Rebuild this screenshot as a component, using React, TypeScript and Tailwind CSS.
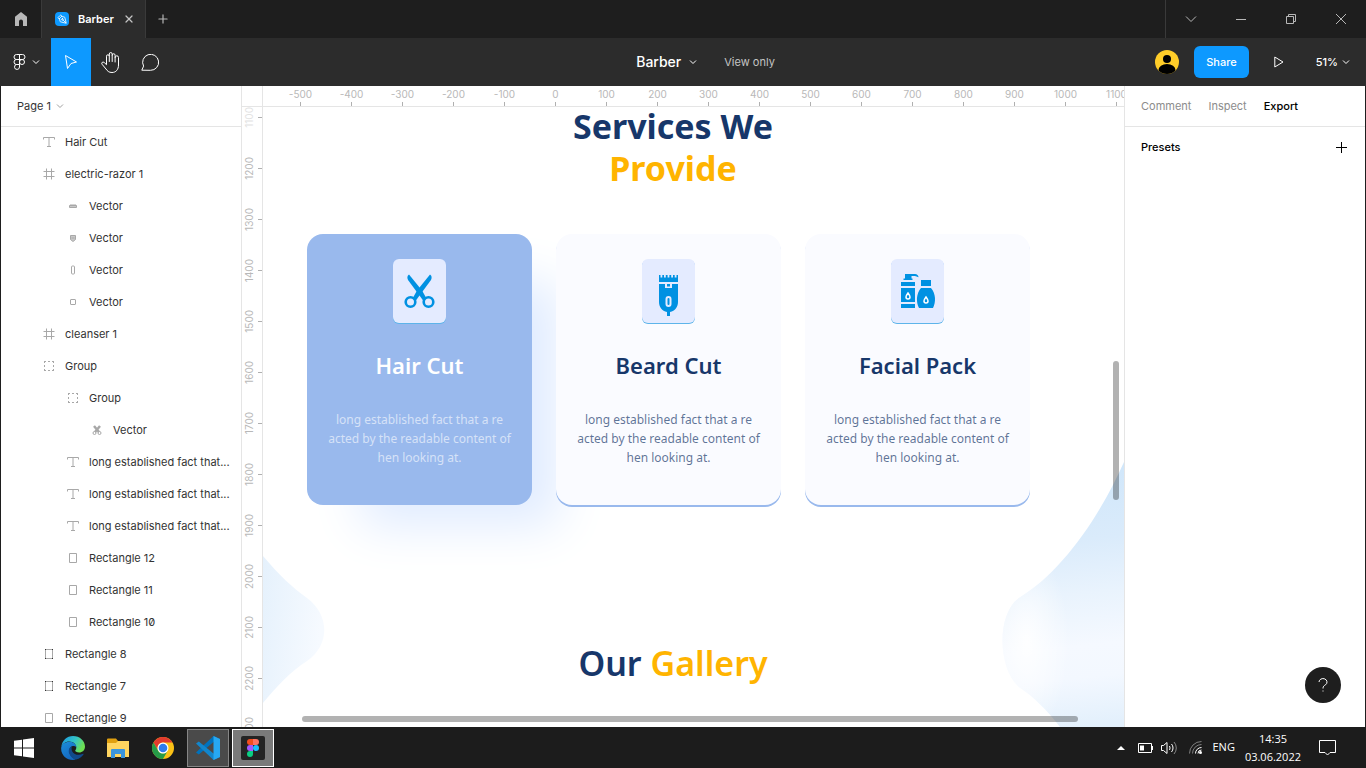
import React from "react";
import { PenTool, Plus, X } from "lucide-react";

function Chevron({ className = "" }: { className?: string }) {
  return (
    <svg width="8" height="8" viewBox="0 0 8 8" fill="none" stroke="currentColor" className={className} aria-hidden="true">
      <path d="M1 2.5l3 3 3-3" />
    </svg>
  );
}

/* ---------- Title bar and toolbar ---------- */

function TitleBar() {
  return (
    <header className="flex h-[38px] shrink-0 items-stretch bg-[#1e1e1e] text-[#b8b8b8]">
      <button aria-label="Home" className="flex w-[42px] items-center justify-center border-r border-[#3a3a3a]">
        <svg width="12" height="14" viewBox="0 0 12 14" fill="#b8b8b8">
          <path d="M6 0l6 4.8V14H8V9.5a2 2 0 0 0-4 0V14H0V4.800z" />
        </svg>
      </button>
      <div className="flex w-[104px] items-center border-r border-[#3a3a3a] bg-[#2c2c2c] pl-[13px]">
        <span className="flex size-[14px] items-center justify-center rounded-sm bg-[#0d99ff] text-white">
          <PenTool size={10} strokeWidth={2} className="-scale-x-100 rotate-90" />
        </span>
        <span className="ml-[9px] text-[11px] font-semibold text-white">Barber</span>
        <button aria-label="Close tab" className="ml-[9px] text-[#c4c4c4]">
          <X size={12} strokeWidth={2.5} />
        </button>
      </div>
      <button aria-label="New tab" className="flex w-[34px] items-center justify-center">
        <Plus size={14} strokeWidth={2} />
      </button>
      <div className="ml-auto flex border-l border-[#3a3a3a]">
        <button aria-label="Show tabs" className="flex w-[50px] items-center justify-center">
          <svg width="12" height="8" viewBox="0 0 12 8" fill="none" stroke="currentColor"><path d="M1 1.500l5 5 5-5" /></svg>
        </button>
        <button aria-label="Minimize" className="flex w-[50px] items-center justify-center">
          <svg width="10" height="10" viewBox="0 0 10 10" stroke="currentColor"><path d="M0 5.500h10" /></svg>
        </button>
        <button aria-label="Restore" className="flex w-[50px] items-center justify-center">
          <svg width="10" height="10" viewBox="0 0 10 10" fill="none" stroke="currentColor"><path d="M.5 2.500h7v7h-7zM2.500 2.500v-2h7v7h-2" /></svg>
        </button>
        <button aria-label="Close window" className="flex w-[50px] items-center justify-center">
          <svg width="10" height="10" viewBox="0 0 10 10" stroke="currentColor"><path d="M0 0l10 10M10 0L0 10" /></svg>
        </button>
      </div>
    </header>
  );
}

function Toolbar() {
  return (
    <nav className="flex h-12 shrink-0 items-stretch bg-[#2c2c2c] text-white">
      <div className="flex flex-1 items-stretch pl-px">
        <button aria-label="Main menu" className="flex w-[50px] items-center gap-1.5 pl-3">
          <svg width="13" height="16" viewBox="0 0 13 16" fill="none" stroke="white">
            <path d="M6.500.5h-3a2.500 2.500 0 0 0 0 5h3zM6.500.5h3a2.500 2.500 0 0 1 0 5h-3zM6.500 5.500h-3a2.500 2.500 0 0 0 0 5h3zM3.500 10.500a2.500 2.500 0 1 0 3 2.500v-2.500z" />
            <circle cx="9" cy="8" r="2.500" />
          </svg>
          <Chevron />
        </button>
        <button aria-label="Move" className="flex w-10 items-center justify-center bg-[#0d99ff]">
          <svg width="14" height="16" viewBox="0 0 14 16" fill="none" stroke="white" strokeLinejoin="round">
            <path d="M1.500 1.500l11 6.500-5.500 1.500L3.500 14.500z" />
          </svg>
        </button>
        <button aria-label="Hand tool" className="flex w-[39px] items-center justify-center">
          <svg width="19" height="21" viewBox="0 0 19 21" fill="none" stroke="white" strokeLinecap="round" strokeLinejoin="round">
            <path d="M5.500 11V4.200a1.400 1.400 0 0 1 2.800 0V9.500M8.300 4V2a1.400 1.400 0 0 1 2.900 0v7.500M11.200 3.200a1.400 1.400 0 0 1 2.900 0V10M14.100 5.500a1.600 1.600 0 0 1 3.400 0V13c0 4.500-2.500 7.500-6.500 7.500-3.200 0-4.600-1.500-6-3.500L1 12.200c-1-1.400.8-2.900 2.200-1.700l2.300 2.200V11" />
          </svg>
        </button>
        <button aria-label="Add comment" className="flex w-10 items-center justify-center">
          <svg width="18" height="17" viewBox="0 0 18 17" fill="none" stroke="white" strokeLinejoin="round">
            <path d="M.8 16.200l1.800-4.100A8 8 0 1 1 9.500 16.300z" />
          </svg>
        </button>
      </div>
      <div className="flex items-center pl-11">
        <button className="flex items-center gap-2 text-sm font-medium">
          Barber
          <Chevron />
        </button>
        <span className="ml-[27px] text-[11px] text-[#c4c4c4]">View only</span>
      </div>
      <div className="flex flex-1 items-center justify-end">
        <svg width="24" height="24" viewBox="0 0 24 24" role="img" aria-label="Account">
          <defs><clipPath id="avatar"><circle cx="12" cy="12" r="12" /></clipPath></defs>
          <g clipPath="url(#avatar)">
            <rect width="24" height="24" fill="#ffcd29" />
            <circle cx="12" cy="9" r="4" />
            <ellipse cx="12" cy="20" rx="8.500" ry="6" />
          </g>
        </svg>
        <button className="ml-[15px] h-8 rounded-md bg-[#0d99ff] px-3 text-[11px] font-medium">Share</button>
        <button aria-label="Present" className="ml-[25px]">
          <svg width="10" height="12" viewBox="0 0 10 12" fill="none" stroke="white"><path d="M.8 1v10L9 6z" /></svg>
        </button>
        <button className="ml-8 mr-4 flex items-center gap-1 text-[11px] font-medium">
          51%
          <Chevron />
        </button>
      </div>
    </nav>
  );
}

/* ---------- Layers panel ---------- */

type LayerKind = "text" | "frame" | "group" | "rect" | "image" | "blade" | "body" | "pill" | "square" | "scissors";

const layers: { name: string; kind: LayerKind; level: 0 | 1 | 2 }[] = [
  { name: "Hair Cut", kind: "text", level: 0 },
  { name: "electric-razor 1", kind: "frame", level: 0 },
  { name: "Vector", kind: "blade", level: 1 },
  { name: "Vector", kind: "body", level: 1 },
  { name: "Vector", kind: "pill", level: 1 },
  { name: "Vector", kind: "square", level: 1 },
  { name: "cleanser 1", kind: "frame", level: 0 },
  { name: "Group", kind: "group", level: 0 },
  { name: "Group", kind: "group", level: 1 },
  { name: "Vector", kind: "scissors", level: 2 },
  { name: "long established fact that...", kind: "text", level: 1 },
  { name: "long established fact that...", kind: "text", level: 1 },
  { name: "long established fact that...", kind: "text", level: 1 },
  { name: "Rectangle 12", kind: "rect", level: 1 },
  { name: "Rectangle 11", kind: "rect", level: 1 },
  { name: "Rectangle 10", kind: "rect", level: 1 },
  { name: "Rectangle 8", kind: "image", level: 0 },
  { name: "Rectangle 7", kind: "image", level: 0 },
  { name: "Rectangle 9", kind: "rect", level: 0 },
];

const indents = { 0: "pl-[42px]", 1: "pl-[66px]", 2: "pl-[90px]" };

function LayerIcon({ kind }: { kind: LayerKind }) {
  return (
    <svg width="12" height="12" viewBox="0 0 12 12" fill="none" stroke="#a8a8a8" className="shrink-0" aria-hidden="true">
      {kind === "text" && <path d="M.5 3.500v-2h11v2M6 1.500v9.500M4 10.500h4" />}
      {kind === "frame" && <path d="M3.500.5v11M8.500.5v11M.5 3.500h11M.5 8.500h11" />}
      {kind === "group" && <path d="M1 1.500h2M5 1.500h2M9 1.500h2M1 10.500h2M5 10.500h2M9 10.500h2M1.500 1v2M1.500 5v2M1.500 9v2M10.500 1v2M10.500 5v2M10.500 9v2" />}
      {kind === "rect" && <path d="M2.500 1.500h7v9h-7z" />}
      {kind === "image" && (
        <>
          <path d="M2.500 1.500h7v9h-7z" />
          <path d="M2 1.500h1M9 1.500h1M2 10.500h1M9 10.500h1" stroke="#333333" />
        </>
      )}
      {kind === "blade" && <path d="M2.500 7.500v-2h7v2zM3 5h6" fill="#c8c8c8" />}
      {kind === "body" && <path d="M3.500 3.500h5v4L6 9.500 3.500 7.500zM4.500 6h3" fill="#c8c8c8" />}
      {kind === "pill" && <rect x="4.500" y="2" width="3" height="8" rx="1" />}
      {kind === "square" && <rect x="3.500" y="3.500" width="5" height="5" rx="0.500" />}
      {kind === "scissors" && (
        <>
          <path d="M3 2l5 6M9 2L4 8" strokeWidth="2.500" />
          <circle cx="3.500" cy="9" r="1.500" />
          <circle cx="8.500" cy="9" r="1.500" />
        </>
      )}
    </svg>
  );
}

function LayersPanel() {
  return (
    <aside className="flex w-60 shrink-0 flex-col overflow-hidden bg-white text-[11px] text-[#333333]">
      <button className="flex h-10 shrink-0 items-center gap-[5px] pl-4 shadow-[0_1px_0_#e5e5e5]">
        Page 1
        <Chevron className="text-[#a0a0a0]" />
      </button>
      <ul className="slashed-zero">
        {layers.map((layer, i) => (
          <li key={i} className={`flex h-8 items-center gap-[10px] ${indents[layer.level]}`}>
            <LayerIcon kind={layer.kind} />
            <span className="whitespace-nowrap">{layer.name}</span>
          </li>
        ))}
      </ul>
    </aside>
  );
}

/* ---------- Canvas ---------- */

const xMarks = Array.from({ length: 17 }, (_, i) => -500 + i * 100);
const yMarks = Array.from({ length: 13 }, (_, i) => 1100 + i * 100);

function ScissorsIcon() {
  return (
    <svg width="53" height="64" viewBox="0 0 53 64" fill="#0091e2" aria-hidden="true">
      <path d="M16 15.500c-1.700 1.300-2.200 3.200-1 5.500L30.500 42l3-2.600-4.500-8z" />
      <path d="M37 15.500c1.700 1.300 2.200 3.200 1 5.500L22.500 42l-3-2.600 4.500-8z" />
      <g fill="none" stroke="#0091e2" strokeWidth="2.600">
        <circle cx="17.500" cy="43" r="4.800" />
        <circle cx="35.500" cy="43" r="4.800" />
      </g>
    </svg>
  );
}

function RazorIcon() {
  return (
    <svg width="53" height="64" viewBox="0 0 53 64" fill="#0091e2" aria-hidden="true">
      <path d="M17 16h1.500v2.500h1.800V16H22v2.500h1.800V16h1.800v2.500h1.800V16h1.800v2.500H31V16h1.700v2.500h1.800V16H36v7H17z" />
      <path d="M17 25h6v4h7v-4h6v18c0 5-3 9-8 10v4h-3v-4c-5-1-8-5-8-10z" />
      <path d="M25 25h3v2.500h-3z" />
      <rect x="24.500" y="38" width="4" height="9" rx="2" fill="none" stroke="#e4ebff" strokeWidth="2" />
    </svg>
  );
}

function CleanserIcon() {
  return (
    <svg width="53" height="64" viewBox="0 0 53 64" fill="#0091e2" aria-hidden="true">
      <path d="M14 15h10c2 0 3.500 1.300 3.500 3.200l-2-.7c-.6-.3-1-.5-2-.5h-3v2.500h1V21h-9v-1.500h1.500zM10 23h14v4H10zM10 29h14v14H10zM10 45h14v4H10zM30 21h10v6H30zM30 29h10c5 6 5 14 2 20H28c-3-6-3-14 2-20z" />
      <path d="M17 34c1.500 2 2 3 2 4a2 2 0 0 1-4 0c0-1 .5-2 2-4zM35 38c1.500 2 2 3 2 4a2 2 0 0 1-4 0c0-1 .5-2 2-4z" stroke="white" strokeWidth="1.500" />
    </svg>
  );
}

const services = [
  { title: "Hair Cut", icon: <ScissorsIcon />, active: true },
  { title: "Beard Cut", icon: <RazorIcon />, active: false },
  { title: "Facial Pack", icon: <CleanserIcon />, active: false },
];

function ServiceCard({ title, icon, active }: (typeof services)[number]) {
  return (
    <article
      className={`flex w-[225px] shrink-0 flex-col items-center rounded-2xl pt-[25px] pb-[38px] ${
        active
          ? "bg-[#99b9ed] text-white shadow-[40px_34px_50px_-14px_#dfebff]"
          : "relative bg-[#fafbff] text-[#17376a] shadow-[0_2px_0_#99b9ed]"
      }`}
    >
      <div className="rounded-md bg-[#e4ebff] shadow-[0_1px_0_#5db4ea]">{icon}</div>
      <h2 className="mt-[26px] text-[22px] leading-8 font-semibold">{title}</h2>
      <p className={`mt-[29px] text-center text-xs leading-[19px] ${active ? "text-white/60" : "text-[#17376a]/70"}`}>
        long established fact that a re
        <br />
        acted by the readable content of
        <br />
        hen looking at.
      </p>
    </article>
  );
}

function Canvas() {
  return (
    <main className="flex min-w-0 flex-1 flex-col border-l border-[#e5e5e5] bg-white">
      <div className="flex h-[21px] shrink-0 text-[10px] leading-4 text-[#b8b8b8]">
        <div className="w-[21px] shrink-0 border-r border-b border-[#e5e5e5]" />
        <div className="flex min-w-0 flex-1 overflow-hidden border-b border-[#e5e5e5] pl-3">
          {xMarks.map((mark) => (
            <div key={mark} className="flex w-[51px] shrink-0 flex-col items-center">
              {mark}
              <span className="h-1 w-px bg-[#b0b0b0]" />
            </div>
          ))}
        </div>
      </div>
      <div className="flex min-h-0 flex-1">
        <div className="w-[21px] shrink-0 overflow-hidden border-r border-[#e5e5e5] text-[10px] leading-[14px] text-[#b8b8b8]">
          <div className="-mt-[15px] flex flex-col">
            {yMarks.map((mark) => (
              <div key={mark} className="flex h-[51px] shrink-0 items-center justify-between">
                <span className={`w-3.5 rotate-180 text-center [writing-mode:vertical-rl] ${mark === 1100 ? "opacity-40" : ""}`}>{mark}</span>
                <span className="h-px w-1 bg-[#b0b0b0]" />
              </div>
            ))}
          </div>
        </div>
        <div className="relative min-w-0 flex-1 overflow-hidden">
          <svg width="62" height="150" viewBox="0 0 62 150" className="absolute top-[449px] left-0" aria-hidden="true">
            <defs>
              <linearGradient id="waveLeft" x1="0" y1="0" x2="1" y2="0.300">
                <stop offset="0" stopColor="#e5f1fc" />
                <stop offset="1" stopColor="#f6faff" />
              </linearGradient>
            </defs>
            <path d="M0 0C16 19 30 32 44 42C67 59 67 89 44 105C28 115 14 130 0 147z" fill="url(#waveLeft)" />
          </svg>
          <svg width="122" height="265" viewBox="0 0 122 265" className="absolute right-0 bottom-0" aria-hidden="true">
            <defs>
              <linearGradient id="waveRight" x1="0.500" y1="0" x2="0.550" y2="1">
                <stop offset="0" stopColor="#cfe6fa" />
                <stop offset="0.300" stopColor="#daebfb" />
                <stop offset="0.500" stopColor="#e9f3fd" />
                <stop offset="0.700" stopColor="#f5f9ff" />
                <stop offset="0.820" stopColor="#f3f8ff" />
                <stop offset="1" stopColor="#e3f0fc" />
              </linearGradient>
              <radialGradient id="waveGlow" cx="0.200" cy="0.680" r="0.350">
                <stop offset="0" stopColor="white" stopOpacity="0.900" />
                <stop offset="1" stopColor="white" stopOpacity="0" />
              </radialGradient>
            </defs>
            <path d="M122 0C98 54 60 110 17 136C-5 151-5 205 17 225C32 235 45 248 58 265H122z" fill="url(#waveRight)" />
            <path d="M122 0C98 54 60 110 17 136C-5 151-5 205 17 225C32 235 45 248 58 265H122z" fill="url(#waveGlow)" />
          </svg>

          <div className="-mt-0.5 ml-11 w-[732px] font-['Noto_Sans',sans-serif]">
            <h1 className="text-center text-[34px] leading-[42px] font-bold text-[#17376a]">
              Services We
              <br />
              <span className="text-[#ffb400]">Provide</span>
            </h1>
            <div className="mt-[45px] flex gap-6">
              {services.map((service) => (
                <ServiceCard key={service.title} {...service} />
              ))}
            </div>
            <h1 className="mt-[137px] text-center text-[34px] leading-[42px] font-semibold text-[#17376a]">
              Our <span className="text-[#ffb400]">Gallery</span>
            </h1>
          </div>

          <div className="absolute right-[5px] top-[254px] h-[139px] w-1.5 rounded-full bg-black/30" />
          <div className="absolute right-[46px] bottom-[5px] left-[39px] h-1.5 rounded-full bg-black/30" />
        </div>
      </div>
    </main>
  );
}

/* ---------- Export panel ---------- */

function ExportPanel() {
  return (
    <aside className="relative w-[241px] shrink-0 border-l border-[#e5e5e5] bg-white text-[11px] text-black">
      <div className="flex h-[41px] items-center gap-[17px] border-b border-[#e5e5e5] pl-4">
        <button className="text-[#8c8c8c]">Comment</button>
        <button className="text-[#8c8c8c]">Inspect</button>
        <button className="font-medium">Export</button>
      </div>
      <div className="flex h-10 items-center justify-between pr-[18px] pl-4">
        <h3 className="font-medium">Presets</h3>
        <button aria-label="Add preset">
          <svg width="11" height="11" viewBox="0 0 11 11" stroke="black"><path d="M5.500 0v11M0 5.500h11" /></svg>
        </button>
      </div>
      <button aria-label="Help" className="absolute right-6 bottom-6 flex size-9 items-center justify-center rounded-full bg-[#1e1e1e]">
        <svg width="10" height="14" viewBox="0 0 10 14" fill="none" stroke="white">
          <path d="M1 4a4 3.500 0 1 1 6.500 2.800C6 7.800 5 8.300 5 10.500M5 12.500v1" />
        </svg>
      </button>
    </aside>
  );
}

/* ---------- Taskbar ---------- */

function Taskbar() {
  return (
    <footer className="flex h-[41px] shrink-0 items-stretch bg-[#1c1c1c] font-['Open_Sans',sans-serif] text-[11px] text-white">
      <button aria-label="Start" className="flex w-12 items-center justify-center">
        <svg width="20" height="20" viewBox="0 0 20 20" fill="white"><path d="M0 2.800l8-1.100v7.800H0zM9 1.500L20 0v9.500H9zM0 10.500h8v7.800l-8-1.100zM9 10.500h11V20L9 18.500z" /></svg>
      </button>
      <button aria-label="Edge" className="ml-0.5 flex w-[45px] items-center justify-center">
        <svg width="24" height="24" viewBox="0 0 24 24">
          <defs>
            <linearGradient id="edgeTop" x1="0" y1="0" x2="1" y2="0.400">
              <stop offset="0.100" stopColor="#1c9de0" />
              <stop offset="0.600" stopColor="#35c5c5" />
              <stop offset="1" stopColor="#6ddf52" />
            </linearGradient>
            <linearGradient id="edgeSide" x1="0" y1="0" x2="0.500" y2="1">
              <stop offset="0" stopColor="#1b8edb" />
              <stop offset="1" stopColor="#1568bf" />
            </linearGradient>
          </defs>
          <path d="M.3 11C1 4.500 5.800 0 12 0c6.800 0 12 5 12 10.500 0 3.700-2.600 6-5.800 6-2.600 0-4-1-4-1.900 0-.6 1.100-1.200 1.100-3.200 0-3-3-5.900-7-5.900-4 0-7 2.500-8 5.500z" fill="url(#edgeTop)" />
          <path d="M.2 11.500C1 8 4.500 5.800 8.500 5.800c4 0 6.800 2.600 6.800 5.300-1-.9-2.200-1.300-3.500-1C9 10.500 7.500 14 8.800 17.500c1 2.700 3.300 5 6 6.100C7.500 25.500-.6 20 .2 11.500z" fill="url(#edgeSide)" />
          <path d="M11 10.300c-3 1.200-4 4.500-2.600 7.700 1.200 3 4 5.300 6.800 5.500 3.300-.8 5.800-2.800 7.400-5.200.3-.5-.1-.8-.5-.6-4.500 2.300-9 .8-10.700-2-1-1.700-1.100-3.600-.4-5.400z" fill="#114a8b" />
        </svg>
      </button>
      <button aria-label="File Explorer" className="flex w-[45px] items-center justify-center">
        <svg width="22" height="20" viewBox="0 0 22 20">
          <path d="M0 1.500A1 1 0 0 1 1 .500h8l2 2.500v3H0z" fill="#e0a010" />
          <path d="M0 5h9l2-2h11v16H0z" fill="#ffd560" />
          <path d="M4 20v-8a1 1 0 0 1 1-1h12a1 1 0 0 1 1 1v8h-4v-4H8v4z" fill="#3a94dc" />
        </svg>
      </button>
      <button aria-label="Chrome" className="flex w-[45px] items-center justify-center">
        <svg width="22" height="22" viewBox="0 0 22 22">
          <circle cx="11" cy="11" r="11" fill="#fbc116" />
          <path d="M1.500 5.500A11 11 0 0 1 20.500 5.500H11a5.500 5.500 0 0 0-4.760 8.250z" fill="#e33b2e" />
          <path d="M1.470 5.500A11 11 0 0 0 11 22l4.760-8.250a5.500 5.500 0 0 1-9.520 0z" fill="#269b48" />
          <circle cx="11" cy="11" r="5.500" fill="white" />
          <circle cx="11" cy="11" r="4.300" fill="#2f7ced" />
        </svg>
      </button>
      <div className="flex w-[45px] items-center justify-center">
        <button aria-label="Visual Studio Code" className="flex h-[38px] w-[42px] items-center justify-center border border-[#868686] bg-[#4a4a4a]">
          <svg width="24" height="24" viewBox="0 0 24 24">
            <path d="M17.500 0L24 3v4l-6.500-1L2.800 18.500 0 16.500z" fill="#0072bd" />
            <path d="M0 7.500L2.800 5.500l14.700 12L24 17v4l-6.500 3z" fill="#1286cc" />
            <path d="M17.500 0L24 3v18l-6.500 3z" fill="#27a8f2" />
          </svg>
        </button>
      </div>
      <div className="flex w-[45px] items-center justify-center">
        <button aria-label="Figma" className="flex h-[38px] w-[42px] items-center justify-center border border-white bg-[#7a7a7a]">
          <svg width="24" height="24" viewBox="0 0 24 24">
            <rect width="24" height="24" rx="2" fill="#242424" />
            <path d="M12 3H9a3 3 0 0 0 0 6h3z" fill="#f24e1e" />
            <path d="M12 3h3a3 3 0 0 1 0 6h-3z" fill="#ff7262" />
            <path d="M12 9H9a3 3 0 0 0 0 6h3z" fill="#a259ff" />
            <circle cx="15" cy="12" r="3" fill="#1abcfe" />
            <path d="M12 15H9a3 3 0 1 0 3 3z" fill="#0acf83" />
          </svg>
        </button>
      </div>
      <div className="ml-auto flex items-center pr-[30px]">
        <svg width="8" height="4" viewBox="0 0 8 4" fill="white"><path d="M4 0l4 4H0z" /></svg>
        <svg width="15" height="10" viewBox="0 0 15 10" fill="none" stroke="white" className="ml-[13px]">
          <path d="M.5.5h13v9H.5zM14.500 3v4" />
          <path d="M2 2.500h4v5H2z" fill="white" stroke="none" />
        </svg>
        <svg width="17" height="14" viewBox="0 0 17 14" fill="none" stroke="white" className="ml-2">
          <path d="M.5 4.500h2l3.500-3v11l-3.500-3h-2zM8.500 5a4 4 0 0 1 0 4M10.500 3a6 6 0 0 1 0 8" />
          <path d="M13 1a9 9 0 0 1 0 12" stroke="#888888" />
        </svg>
        <svg width="13" height="13" viewBox="0 0 13 13" fill="none" stroke="#808080" className="ml-[11px]">
          <path d="M.5 12.500A12 12 0 0 1 12.500.5M3.500 12.500a9 9 0 0 1 9-9" />
          <path d="M6.500 12.500a6 6 0 0 1 6-6M9 12.500a3.500 3.500 0 0 1 3.500-3.500" stroke="white" />
          <circle cx="11.500" cy="11.500" r="1.500" fill="white" stroke="none" />
        </svg>
        <span className="ml-2.5">ENG</span>
        <time className="ml-2.5 text-center leading-[18px]">
          14:35
          <br />
          03.06.2022
        </time>
        <button aria-label="Notifications" className="ml-[18px]">
          <svg width="17" height="17" viewBox="0 0 17 17" fill="none" stroke="white"><path d="M.5 1.500h16v12H11L8.500 16 6 13.500H.5z" /></svg>
        </button>
      </div>
    </footer>
  );
}

export default function App() {
  return (
    <div className="flex h-screen flex-col overflow-hidden font-['Inter',sans-serif]">
      <TitleBar />
      <Toolbar />
      <div className="flex min-h-0 flex-1 border-x border-[#1e1e1e]">
        <LayersPanel />
        <Canvas />
        <ExportPanel />
      </div>
      <Taskbar />
    </div>
  );
}
